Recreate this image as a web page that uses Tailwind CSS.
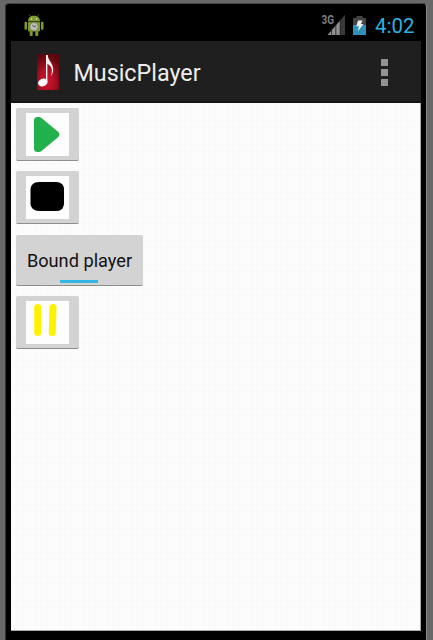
<!DOCTYPE html>
<html lang="en">
<head>
<meta charset="utf-8">
<title>MusicPlayer</title>
<script src="https://cdn.jsdelivr.net/npm/@tailwindcss/browser@4"></script>
</head>
<body class="w-[433px] h-[640px] overflow-hidden bg-[#686868] pt-[3px] pl-[5px] font-[Roboto,sans-serif]">
<div class="w-[422px] h-[637px] rounded-t-[4px] bg-black border-t border-l border-r border-t-[#444] border-l-[#333] border-r-[#8a8a8a] px-[5px]">
  <!-- Status bar -->
  <div class="h-[37px] flex items-center pl-[13px] pr-[7px]">
    <svg class="w-5 h-6 mt-[5px]" viewBox="0 0 20 24">
      <g fill="#7d9b2c">
        <path d="M4 8.500C4 4.500 6.500 2.800 10 2.800s6 1.700 6 5.700z"/>
        <rect x="4" y="9" width="12" height="9.500" rx="1"/>
        <rect x="0.500" y="8.800" width="2.600" height="8" rx="1"/>
        <rect x="16.900" y="8.800" width="2.600" height="8" rx="1"/>
        <rect x="5.700" y="18" width="3" height="5" rx="1"/>
        <rect x="11.300" y="18" width="3" height="5" rx="1"/>
      </g>
      <path d="M6.500 3.500 5.300 1.500M13.500 3.500l1.200-2" stroke="#607a20" stroke-width=".8"/>
      <path d="M4 8.700h12" stroke="#35440f" stroke-width=".7"/>
      <circle cx="7.500" cy="6" r=".7" fill="#e8efcf"/><circle cx="12.500" cy="6" r=".7" fill="#e8efcf"/>
      <circle cx="10" cy="13.700" r="4.200" fill="#b9bcb0" stroke="#777d66" stroke-width=".8"/>
      <path d="M8.300 12 10 13.900l2-1" fill="none" stroke="#555" stroke-width=".9"/>
    </svg>
    <div class="ml-auto flex items-center">
      <svg class="w-6 h-6 mt-[5px]" viewBox="0 0 24 24">
        <path d="M6.500 22 19.300 7.200V22z" fill="#909090"/>
        <path d="M19.300 22V7.200L24 1.800V22z" fill="#3a3a3a"/>
        <path d="M10.500 16v6M14.800 11v11M19.200 6v16" stroke="#222" stroke-width=".8"/>
        <text x="0.500" y="11" font-family="Roboto" font-size="12" font-weight="700" fill="#7d7d7d" textLength="12.500" lengthAdjust="spacingAndGlyphs">3G</text>
      </svg>
      <svg class="w-[13px] h-[21px] ml-[8px] mt-[6px]" viewBox="0 0 13 21">
        <path d="M0 3h3.500V1h6v2H13v17H0z" fill="#444"/>
        <path d="M0 10h13v10H0z" fill="#2d91b8"/>
        <path d="M5 5.500h4.600L8 9h2.500l-5.700 7.500L6 11.300H3.300z" fill="#eee"/>
      </svg>
      <span class="w-[39px] ml-[9px] mt-[7px] text-[20.500px] leading-6 text-[#30b0e0] whitespace-nowrap">4:02</span>
    </div>
  </div>
  <!-- Action bar -->
  <header class="h-[62px] bg-[#1f1f1f] border-b-2 border-[#151515] flex items-center pl-[26px] pr-[32px]">
    <svg class="w-[22px] h-9 mt-[2px]" viewBox="0 0 22 36">
      <defs><radialGradient id="red" cx=".45" cy=".75" r=".75"><stop offset="0" stop-color="#d61430"/><stop offset=".45" stop-color="#ad1024"/><stop offset="1" stop-color="#5b070d"/></radialGradient></defs>
      <path d="M0 0h22v36H0z" fill="url(#red)"/>
      <ellipse cx="5.800" cy="28.500" rx="4.800" ry="3.800" transform="rotate(-22 5.800 28.500)" fill="#fff"/>
      <path d="M9.700 1v27" stroke="#fff" stroke-width="1.300"/>
      <path d="M9.500 1h1.100c.3 5 5.600 8.500 5.600 14 0 3-.8 5-2.300 7.500.8-3 1.300-5 .7-7.700-.7-2.600-2.300-3.900-4.900-5.300z" fill="#eee"/>
    </svg>
    <h1 class="ml-[14.500px] mt-[4px] w-[130px] text-[23.300px] leading-7 text-[#eee] whitespace-nowrap">MusicPlayer</h1>
    <div class="ml-auto flex flex-col gap-[3px] mt-[2px] mr-[1px]">
      <i class="w-[7px] h-[7px] bg-[#939393]"></i><i class="w-[7px] h-[7px] bg-[#939393]"></i><i class="w-[7px] h-[7px] bg-[#939393]"></i>
    </div>
  </header>
  <!-- Player controls -->
  <main class="w-[410px] h-[528px] border-b border-r border-[#aaa] bg-[#fcfcfc] bg-[linear-gradient(#f9f9f9_1px,transparent_1px),linear-gradient(90deg,#f9f9f9_1px,transparent_1px)] bg-[size:6px_6px] pt-[5px] pl-[5px] flex flex-col items-start">
    <button class="w-[63px] h-[53px] rounded-[2px] bg-[#d3d3d3] border-b border-[#8e8e8e] flex items-start pl-[10px] pt-[5px] mb-[10px]" aria-label="Play">
      <svg class="block w-[43px] h-[43px] bg-[#fdfdfd]" viewBox="0 0 43 43"><path d="M11.500 7.500h1.500L29.800 21.500 13 35.500h-1.500z" fill="#22b14c" stroke="#22b14c" stroke-width="7" stroke-linejoin="round"/></svg>
    </button>
    <button class="w-[63px] h-[53px] rounded-[2px] bg-[#d3d3d3] border-b border-[#8e8e8e] flex items-start pl-[10px] pt-[5px] mb-[11px]" aria-label="Stop">
      <svg class="block w-[43px] h-[43px] bg-[#fdfdfd]" viewBox="0 0 43 43"><path d="M13 6h17c5 0 8 3 8 7v14c0 5-3 8-7 8H13c-5 0-8-3-8.500-7V14c0-5 3-8 8.500-8z" fill="#000"/></svg>
    </button>
    <button class="w-[127px] h-[51px] rounded-[2px] bg-[#d3d3d3] border-b border-[#8e8e8e] flex flex-col items-center mb-[10px] pt-[14px]">
      <span class="text-[18.200px] leading-6 text-[#111] whitespace-nowrap">Bound player</span>
      <i class="block w-[38px] h-[3px] mt-[7px] mr-[1px] bg-[#33b5e5]"></i>
    </button>
    <button class="w-[63px] h-[53px] rounded-[2px] bg-[#d3d3d3] border-b border-[#8e8e8e] flex items-start pl-[10px] pt-[5px]" aria-label="Pause">
      <svg class="block w-[43px] h-[43px] bg-[#fdfdfd]" viewBox="0 0 43 43"><path d="M11.700 6.500v25M27 6.500l-.7 25" stroke="#fff200" stroke-width="7" stroke-linecap="round"/></svg>
    </button>
  </main>
</div>
</body>
</html>
